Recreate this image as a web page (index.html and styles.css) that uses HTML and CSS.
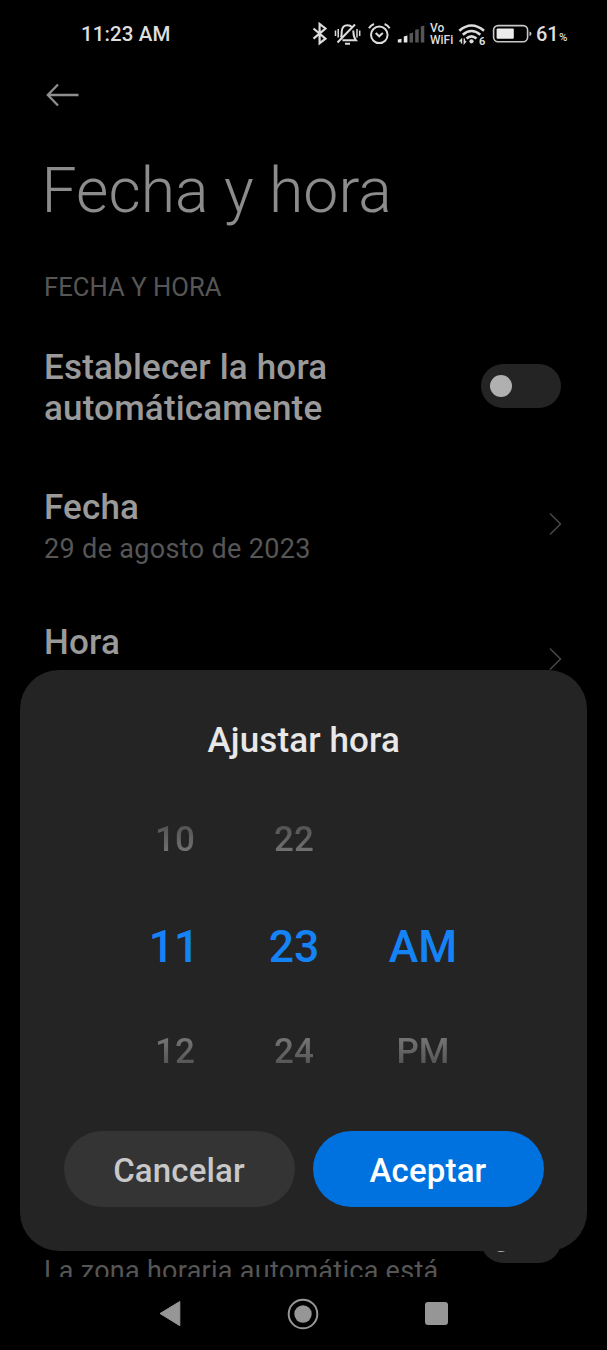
FILE: index.html
```html
<!DOCTYPE html>
<html lang="es">
<head>
<meta charset="utf-8">
<title>Fecha y hora</title>
<link rel="stylesheet" href="styles.css">
</head>
<body>
<main class="phone">
  <div class="screen">
    <header class="status">
      <span class="clock">11:23 AM</span>
      <div class="tray">
        <svg width="22" height="28" viewBox="310 20 22 28" fill="none" stroke="#dcdcdc" stroke-width="2.200"><path d="M313.500 28.500 325.500 38.700 319.600 43.300V23.900L325.500 28.500 313.500 38.700"/></svg>
        <svg width="33" height="28" viewBox="332 20 33 28" fill="none" stroke="#dcdcdc" stroke-width="2"><path d="M337.500 42.500 355 24.500M341 37.500C341.800 36 341.600 34 341.700 31.500C342 27.500 344.500 25.200 347.500 25.200C349.500 25.200 351 26 352 27.200M353.300 30.500C353.500 34 353.300 37 356 40.300H342.500M345 43.800H350"/><path stroke-width="1.500" d="M335.500 30.500V36M338.200 29V37.500M357 29V37.500M359.700 30.500V36"/></svg>
        <svg width="30" height="28" viewBox="365 20 30 28" fill="none" stroke="#dcdcdc" stroke-width="2"><circle cx="379.300" cy="34.800" r="8.300"/><path d="M369 28.300Q370.500 25.300 374 24M384.600 24Q388 25.300 389.600 28.300M375.700 33 379.200 36.300 382.800 33"/></svg>
        <svg width="35" height="28" viewBox="395 20 35 28" fill="#e6e6e6"><path d="M397.800 42.500V39.500L401.500 38.800V42.500ZM403.800 42.500V36.400L407.400 35.500V42.500Z"/><path fill="#555" d="M409.500 42.500V33.400L413 32.500V42.500ZM415.200 42.500V29.800L418.700 29V42.500ZM420.800 42.500V26.400L424.300 25.500V42.500Z"/></svg>
        <div class="vowifi"><span>Vo</span><span>WiFi</span></div>
        <div class="wifi">
          <svg width="33" height="28" viewBox="457 20 33 28" fill="none" stroke="#dcdcdc" stroke-width="2.600"><path d="M459.300 30.700Q471.500 20.300 484 30.700M462.800 34.800Q471.500 27.200 480.300 34.800M466.500 38.600Q471.500 34.200 476.500 38.600"/><circle cx="471.500" cy="41.300" r="2.100" fill="#dcdcdc" stroke="none"/><path stroke-width="1.400" d="M461.500 43.500V39.500L459.500 41.500M464.300 38.500V43L466 41"/></svg>
          <span class="wifi-gen">6</span>
        </div>
        <svg width="44" height="28" viewBox="490 20 44 28"><rect x="493.600" y="25.600" width="34" height="16.200" rx="4.500" fill="none" stroke="#c8c8c8" stroke-width="1.600"/><rect x="496.600" y="28.600" width="17.200" height="10.200" rx="1" fill="#ececec"/><path fill="#c8c8c8" d="M529.500 31.500Q531.500 31.700 531.500 33.700Q531.500 35.700 529.500 36Z"/></svg>
        <span class="level">61</span><span class="percent">%</span>
      </div>
    </header>

    <nav class="toolbar">
      <svg width="34" height="24" viewBox="0 0 34 24" fill="none" stroke="#8e8e8e" stroke-width="2.300"><path d="M33.500 12H2.800M13 1.500 2.800 12 13 22.500"/></svg>
    </nav>
    <h1 class="title">Fecha y hora</h1>
    <h2 class="section">FECHA Y HORA</h2>

    <section class="row row-auto">
      <p class="label">Establecer la hora<br>automáticamente</p>
      <span class="switch"></span>
    </section>
    <section class="row row-date">
      <div><p class="label">Fecha</p><p class="sub">29 de agosto de 2023</p></div>
      <svg class="chevron" width="14" height="24" viewBox="0 0 14 24" fill="none" stroke="#484848" stroke-width="1.500"><path d="M2 1.500 12.500 12 2 22.500"/></svg>
    </section>
    <section class="row row-time">
      <p class="label">Hora</p>
      <svg class="chevron" width="14" height="24" viewBox="0 0 14 24" fill="none" stroke="#484848" stroke-width="1.500"><path d="M2 1.500 12.500 12 2 22.500"/></svg>
    </section>
    <section class="row row-zone">
      <p class="sub sub-zone">La zona horaria automática está</p>
      <span class="switch"></span>
    </section>
  </div>

  <footer class="navbar">
    <svg width="22" height="28" viewBox="0 0 22 28"><path fill="#969696" stroke="#969696" stroke-linejoin="round" d="M1 13.500 20.800 1.500V25.700Z"/></svg>
    <svg width="32" height="32" viewBox="0 0 32 32"><circle cx="16" cy="16" r="14.300" fill="none" stroke="#969696" stroke-width="2"/><circle cx="16" cy="16" r="8.700" fill="#969696"/></svg>
    <span class="recents"></span>
  </footer>

  <div class="dialog">
    <h3 class="dialog-title">Ajustar hora</h3>
    <div class="picker">
      <span class="opt prev">10</span><span class="opt prev">22</span><span></span>
      <span class="now now-hour">11</span><span class="now">23</span><span class="now">AM</span>
      <span class="opt next">12</span><span class="opt next">24</span><span class="opt next">PM</span>
    </div>
    <div class="actions">
      <button class="btn cancel">Cancelar</button>
      <button class="btn accept">Aceptar</button>
    </div>
  </div>
</main>
</body>
</html>
```
FILE: styles.css
```css
* { box-sizing: border-box; margin: 0; padding: 0; }
body { background: #000; font-family: Roboto, sans-serif; }
svg { display: block; flex: none; }
.phone { position: relative; width: 607px; height: 1350px; overflow: hidden; background: #000; }
.screen { height: 1277px; overflow: hidden; display: flex; flex-direction: column; }
.screen > * { flex: none; }

.status { height: 69px; display: flex; justify-content: space-between; color: #dedede; padding-left: 81px; }
.clock { font-size: 20.500px; line-height: 69px; font-weight: 500; letter-spacing: .1px; }
.tray { display: flex; width: 297px; padding-top: 20px; }
.vowifi { width: 27px; display: flex; flex-direction: column; font-size: 12px; font-weight: 500; line-height: 12px; padding-top: 2px; }
.wifi { display: flex; width: 33px; }
.wifi-gen { width: 9px; margin-left: -12px; margin-top: 16px; height: 11px; line-height: 12px; font-size: 11px; font-weight: 700; background: #000; padding-left: 1px; }
.level { font-size: 20px; font-weight: 500; line-height: 29px; width: 25px; padding-left: 2px; }
.percent { font-size: 11.500px; font-weight: 500; line-height: 35px; padding-left: 0; }

.toolbar { height: 51px; padding: 14px 45px 0; }
.title { margin-top: 31px; padding-left: 41.500px; font-size: 62.500px; line-height: 80px; font-weight: 300; letter-spacing: .05px; color: #8c8c8c; }
.section { margin-top: 41px; padding-left: 44px; font-size: 25.600px; line-height: 31px; font-weight: 400; letter-spacing: .05px; color: #565656; }
.row { display: flex; justify-content: space-between; padding: 0 45px 0 44px; }
.row-auto { padding-top: 44px; padding-right: 46px; height: 183px; }
.row-date { height: 135px; }
.row-time { height: 60px; }
.label { font-size: 35px; line-height: 41px; font-weight: 500; letter-spacing: .18px; color: #9a9a9a; white-space: nowrap; }
.sub { font-size: 27px; line-height: 43px; letter-spacing: .34px; color: #565656; white-space: nowrap; }
.switch { flex: none; width: 80px; height: 44px; margin-top: 16.500px; border-radius: 22px; background: #242424; padding: 11px 9px; }
.switch::before { content: ""; display: block; width: 22px; height: 22px; border-radius: 50%; background: #b0b0b0; }
.row-date .label, .row-time .label { padding-top: 1px; }
.chevron { margin-top: 26px; }
.row-zone { margin-top: 538px; padding-right: 46px; }
.row-zone .switch { margin-top: 0; }
.row-zone .switch::before { height: 21.500px; }
.sub-zone { margin-top: 31px; letter-spacing: .27px; }

.navbar { height: 73px; display: flex; align-items: center; padding-left: 159px; }
.navbar svg:nth-child(2) { margin-left: 106px; }
.recents { width: 23px; height: 23px; border-radius: 3px; background: #969696; margin-left: 106px; }

.dialog { position: absolute; left: 20px; top: 670px; width: 567px; height: 581px; border-radius: 39px; background: #242424; padding: 50px 43px 44px 43.500px; }
.dialog-title { font-size: 35px; line-height: 42px; font-weight: 500; letter-spacing: .12px; color: #e8e8e8; text-align: center; }
.picker { display: grid; grid-template-columns: 119px 119px 139px; grid-template-rows: 104px 109px 102px; margin: 26px 0 0 52px; text-align: center; align-items: center; }
.now { font-size: 44.500px; line-height: 54px; font-weight: 500; color: #1583f5; }
.now-hour { padding-right: 2px; }
.opt { font-size: 35px; line-height: 42px; font-weight: 500; color: transparent; background-clip: text; -webkit-background-clip: text; }
.prev { background-image: linear-gradient(#505050 10%, #777 90%); }
.next { background-image: linear-gradient(#777 10%, #505050 90%); }
.actions { display: flex; gap: 18px; margin-top: 28px; }
.btn { width: 231px; height: 76px; border: 0; border-radius: 38px; font: 500 33px/76px Roboto, sans-serif; letter-spacing: .15px; padding-top: 2px; }
.cancel { background: #343434; color: #c8c8c8; }
.accept { background: #0072df; color: #fff; }
```
